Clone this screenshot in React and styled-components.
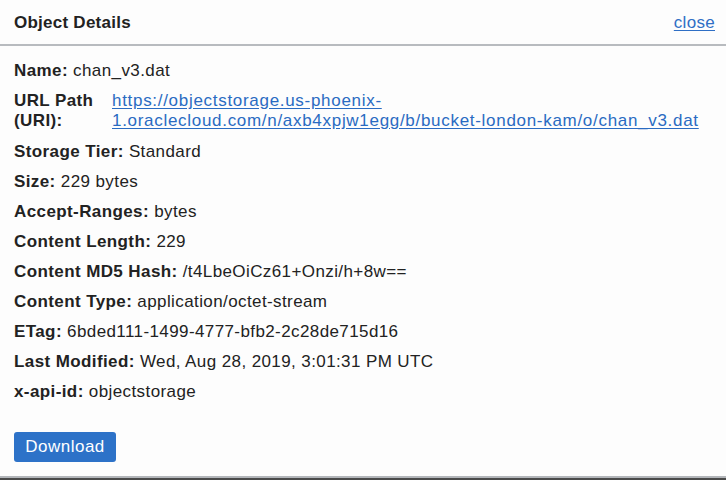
import styled, { createGlobalStyle } from "styled-components";

const GlobalStyle = createGlobalStyle`
  html, body {
    margin: 0;
    padding: 0;
    background: #4a4a4a;
  }
  body {
    font-family: "Liberation Sans", Arial, sans-serif;
    color: #222;
  }
`;

const details = [
  ["Storage Tier:", "Standard"],
  ["Size:", "229 bytes"],
  ["Accept-Ranges:", "bytes"],
  ["Content Length:", "229"],
  ["Content MD5 Hash:", "/t4LbeOiCz61+Onzi/h+8w=="],
  ["Content Type:", "application/octet-stream"],
  ["ETag:", "6bded111-1499-4777-bfb2-2c28de715d16"],
  ["Last Modified:", "Wed, Aug 28, 2019, 3:01:31 PM UTC"],
  ["x-api-id:", "objectstorage"],
];

function App() {
  return (
    <>
      <GlobalStyle />
      <Panel>
        <Header>
          <Title>Object Details</Title>
          <CloseLink href="#">close</CloseLink>
        </Header>
        <Body>
          <Row>
            <Label>Name:</Label> chan_v3.dat
          </Row>
          <UrlRow>
            <Label>URL Path (URI):</Label>
            <UrlLink href="#">
              https://objectstorage.us-phoenix-
              <br />
              1.oraclecloud.com/n/axb4xpjw1egg/b/bucket-london-kam/o/chan_v3.dat
            </UrlLink>
          </UrlRow>
          {details.map(([label, value]) => (
            <Row key={label}>
              <Label>{label}</Label> {value}
            </Row>
          ))}
          <Footer>
            <DownloadButton>Download</DownloadButton>
          </Footer>
        </Body>
      </Panel>
    </>
  );
}

const Panel = styled.div`
  background: #fdfdfd;
  height: 478px;
  box-sizing: border-box;
  border-bottom: 2px solid #b3b6ba;
  display: flex;
  flex-direction: column;
`;

const Header = styled.div`
  height: 46px;
  box-sizing: border-box;
  padding: 2px 11px 0 14px;
  border-bottom: 2px solid #b8bbbf;
  display: flex;
  align-items: center;
  justify-content: space-between;
  font-size: 17px;
  letter-spacing: 0.25px;
`;

const Title = styled.div`
  font-weight: bold;
  color: #222;
`;

const CloseLink = styled.a`
  color: #2f6fc5;
  text-decoration: underline;
  text-underline-offset: 2px;
  letter-spacing: 0.3px;
`;

const Body = styled.div`
  padding: 15px 14px 0 14px;
  display: flex;
  flex-direction: column;
  gap: 10px;
  font-size: 17px;
  line-height: 20px;
  letter-spacing: 0.4px;
`;

const Row = styled.div`
  white-space: nowrap;
`;

const Label = styled.span`
  font-weight: bold;
`;

const UrlRow = styled.div`
  display: grid;
  grid-template-columns: 98px 1fr;
  margin-bottom: 1px;
`;

const UrlLink = styled.a`
  color: #2a6bc2;
  text-decoration: underline;
  text-underline-offset: 2px;
  white-space: nowrap;
  letter-spacing: 0.7px;
`;

const Footer = styled.div`
  padding-top: 20px;
`;

const DownloadButton = styled.button`
  width: 102px;
  height: 30px;
  background: #2d72c8;
  color: #fff;
  border: none;
  border-radius: 3px;
  font-family: "Liberation Sans", Arial, sans-serif;
  font-size: 17px;
  letter-spacing: 0.5px;
  padding: 0;
  cursor: pointer;
`;

export default App;
